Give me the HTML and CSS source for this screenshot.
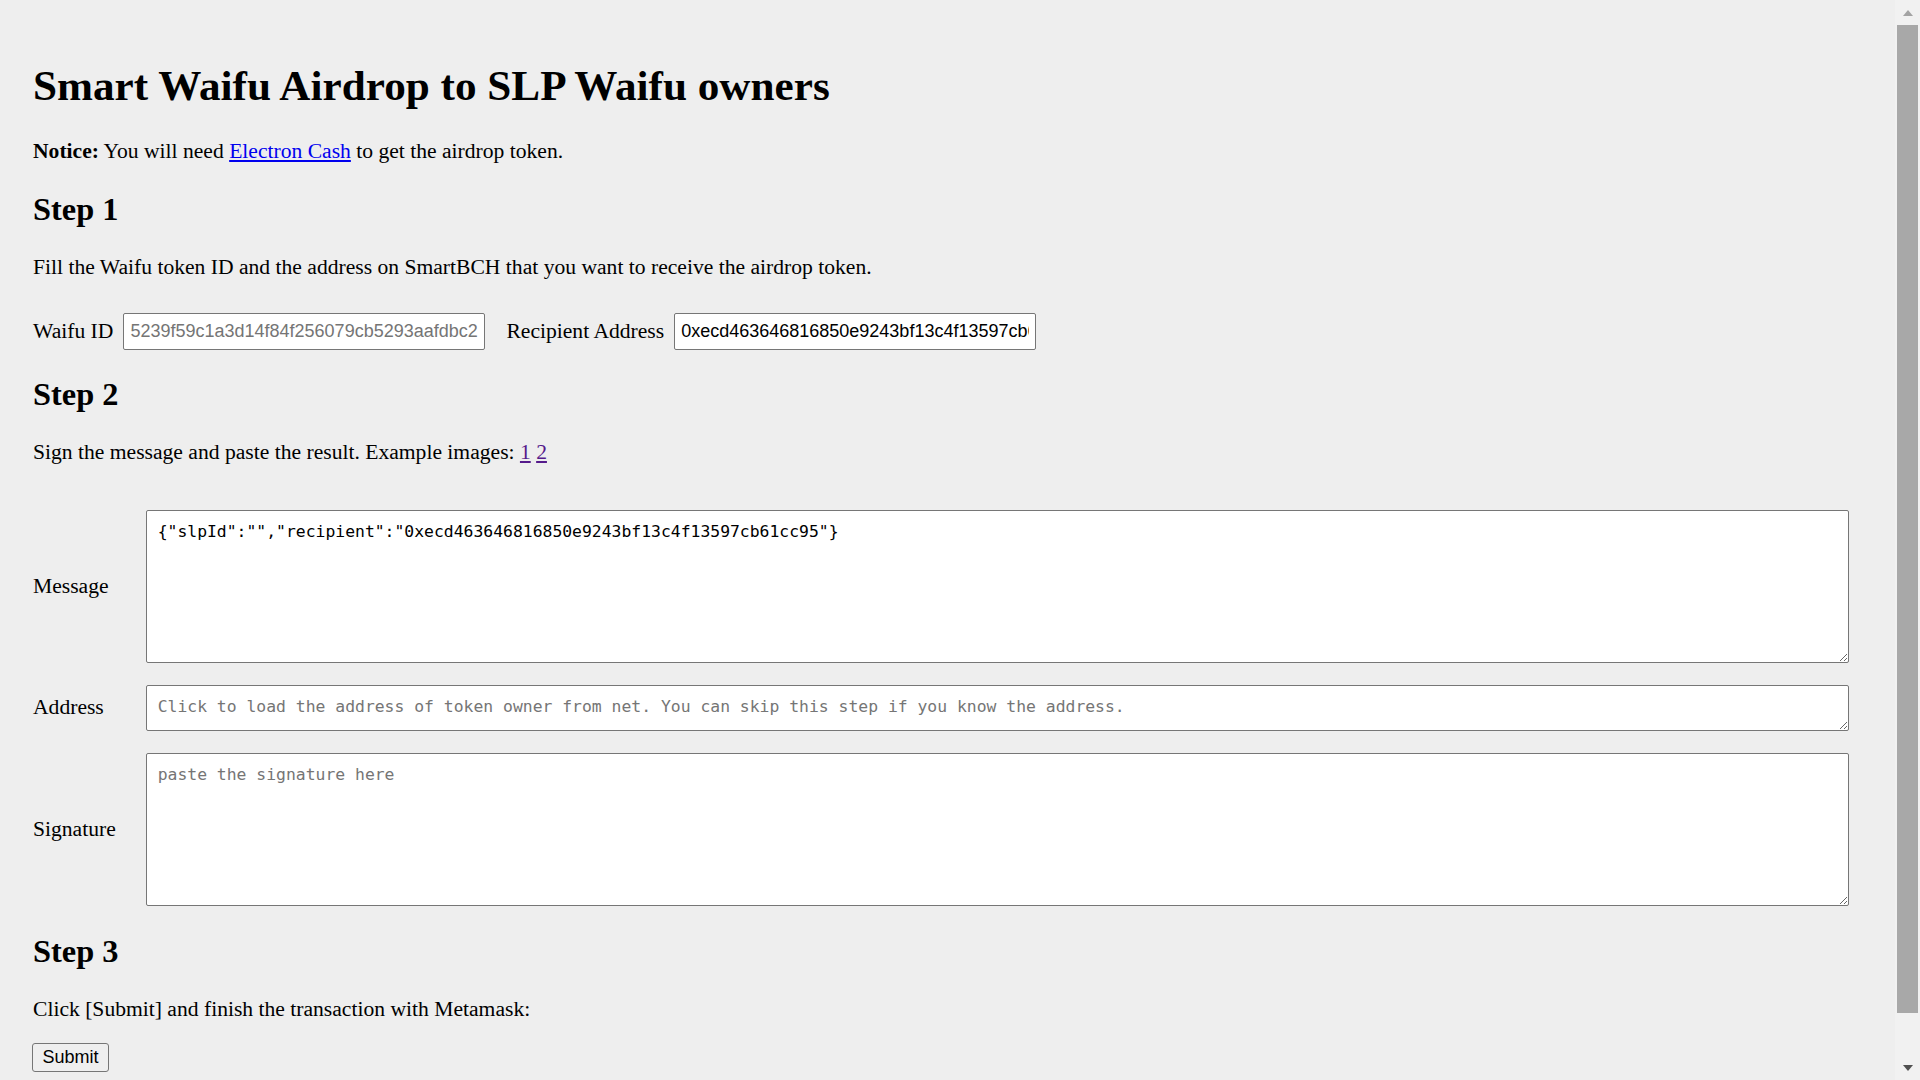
FILE: index.html
```html
<!DOCTYPE html>
<html lang="en">
<head>
    <meta charset="UTF-8">
    <meta name="viewport" content="width=device-width, initial-scale=1.0">
    <title>Smart Waifu Airdrop</title>
    <link rel="stylesheet" href="styles.css">
</head>
<body>
    <div class="page">
        <h1>Smart Waifu Airdrop to SLP Waifu owners</h1>
        <p><b>Notice:</b> You will need <a class="link" href="#">Electron Cash</a> to get the airdrop token.</p>

        <h2>Step 1</h2>
        <p>Fill the Waifu token ID and the address on SmartBCH that you want to receive the airdrop token.</p>
        <div class="ids">
            <label class="field">Waifu ID <input type="text" placeholder="5239f59c1a3d14f84f256079cb5293aafdbc2"></label>
            <label class="field">Recipient Address <input type="text" value="0xecd463646816850e9243bf13c4f13597cb61cc95"></label>
        </div>

        <h2>Step 2</h2>
        <p>Sign the message and paste the result. Example images: <a class="seen" href="#">1</a> <a class="seen" href="#">2</a></p>
        <div class="sign">
            <label class="name">Message</label>
            <textarea class="tall" readonly>{"slpId":"","recipient":"0xecd463646816850e9243bf13c4f13597cb61cc95"}</textarea>
            <label class="name">Address</label>
            <textarea class="short" placeholder="Click to load the address of token owner from net. You can skip this step if you know the address."></textarea>
            <label class="name">Signature</label>
            <textarea class="tall" placeholder="paste the signature here"></textarea>
        </div>

        <h2>Step 3</h2>
        <p>Click [Submit] and finish the transaction with Metamask:</p>
        <button class="submit">Submit</button>
    </div>

    <!-- window scrollbar -->
    <div class="scrollbar">
        <span class="sb-btn sb-up"></span>
        <span class="sb-thumb"></span>
        <span class="sb-btn sb-down"></span>
    </div>
</body>
</html>
```

FILE: styles.css
```css
html{
    background: #eeeeee;
}
body{
    margin: 0;
    font-family: "Liberation Serif", "Times New Roman", serif;
    font-size: 21.6px;
    color: #000;
}
.page{
    margin-right: 25px;
    padding: 32px 33px 54px 33px;
}
h1{
    font-size: 43.2px;
    margin: 28.9px 0;
}
h2{
    font-size: 32.4px;
    margin: 26.9px 0;
}
p{
    margin: 21.6px 0;
}
.link{
    color: #0000ee;
}
.seen{
    color: #551a8b;
}

/* step 1 */
.ids{
    display: flex;
    align-items: center;
    gap: 21px;
    margin-top: 33px;
}
.field{
    display: flex;
    align-items: center;
    gap: 10px;
}
.field input{
    box-sizing: border-box;
    width: 362px;
    height: 37px;
    margin: 0;
    padding: 0 6px;
    border: 1px solid #767676;
    border-radius: 2px;
    background: #fff;
    font-family: "Liberation Sans", Arial, sans-serif;
    font-size: 18px;
    color: #000;
}
.field input::placeholder{
    color: #757575;
}

/* step 2 */
.sign{
    display: grid;
    grid-template-columns: 113px 1fr;
    align-items: center;
    row-gap: 22px;
    margin: 44.5px 13px 0 0;
}
.sign textarea{
    display: block;
    box-sizing: border-box;
    width: 100%;
    margin: 0;
    padding: 10.67px;
    border: 1px solid #767676;
    border-radius: 2px;
    background: #fff;
    font-family: "DejaVu Sans Mono", "Liberation Mono", monospace;
    font-size: 16.4px;
    color: #000;
}
.sign textarea::placeholder{
    color: #757575;
}
.tall{
    height: 153px;
}
.short{
    height: 46px;
}

/* step 3 */
.submit{
    display: block;
    margin: 21px 0 0 -1px;
    padding: 3px 9.5px;
    height: 29px;
    border: 1px solid #767676;
    border-radius: 3px;
    background: #efefef;
    font-family: "Liberation Sans", Arial, sans-serif;
    font-size: 18px;
    color: #000;
}

/* scrollbar drawn over the right edge */
.scrollbar{
    position: fixed;
    top: 0;
    right: 0;
    width: 25px;
    height: 100vh;
    display: flex;
    flex-direction: column;
    background: #f1f1f1;
}
.sb-btn{
    height: 25px;
    flex: none;
    display: flex;
    align-items: center;
    justify-content: center;
}
.sb-up::before,
.sb-down::before{
    content: "";
    width: 0;
    height: 0;
    border-left: 5.5px solid transparent;
    border-right: 5.5px solid transparent;
}
.sb-up::before{
    border-bottom: 6px solid #a3a3a3;
}
.sb-down{
    margin-top: auto;
}
.sb-down::before{
    border-top: 6px solid #505050;
}
.sb-thumb{
    height: 988px;
    margin: 0 2px;
    background: #a8a8a8;
}
```
